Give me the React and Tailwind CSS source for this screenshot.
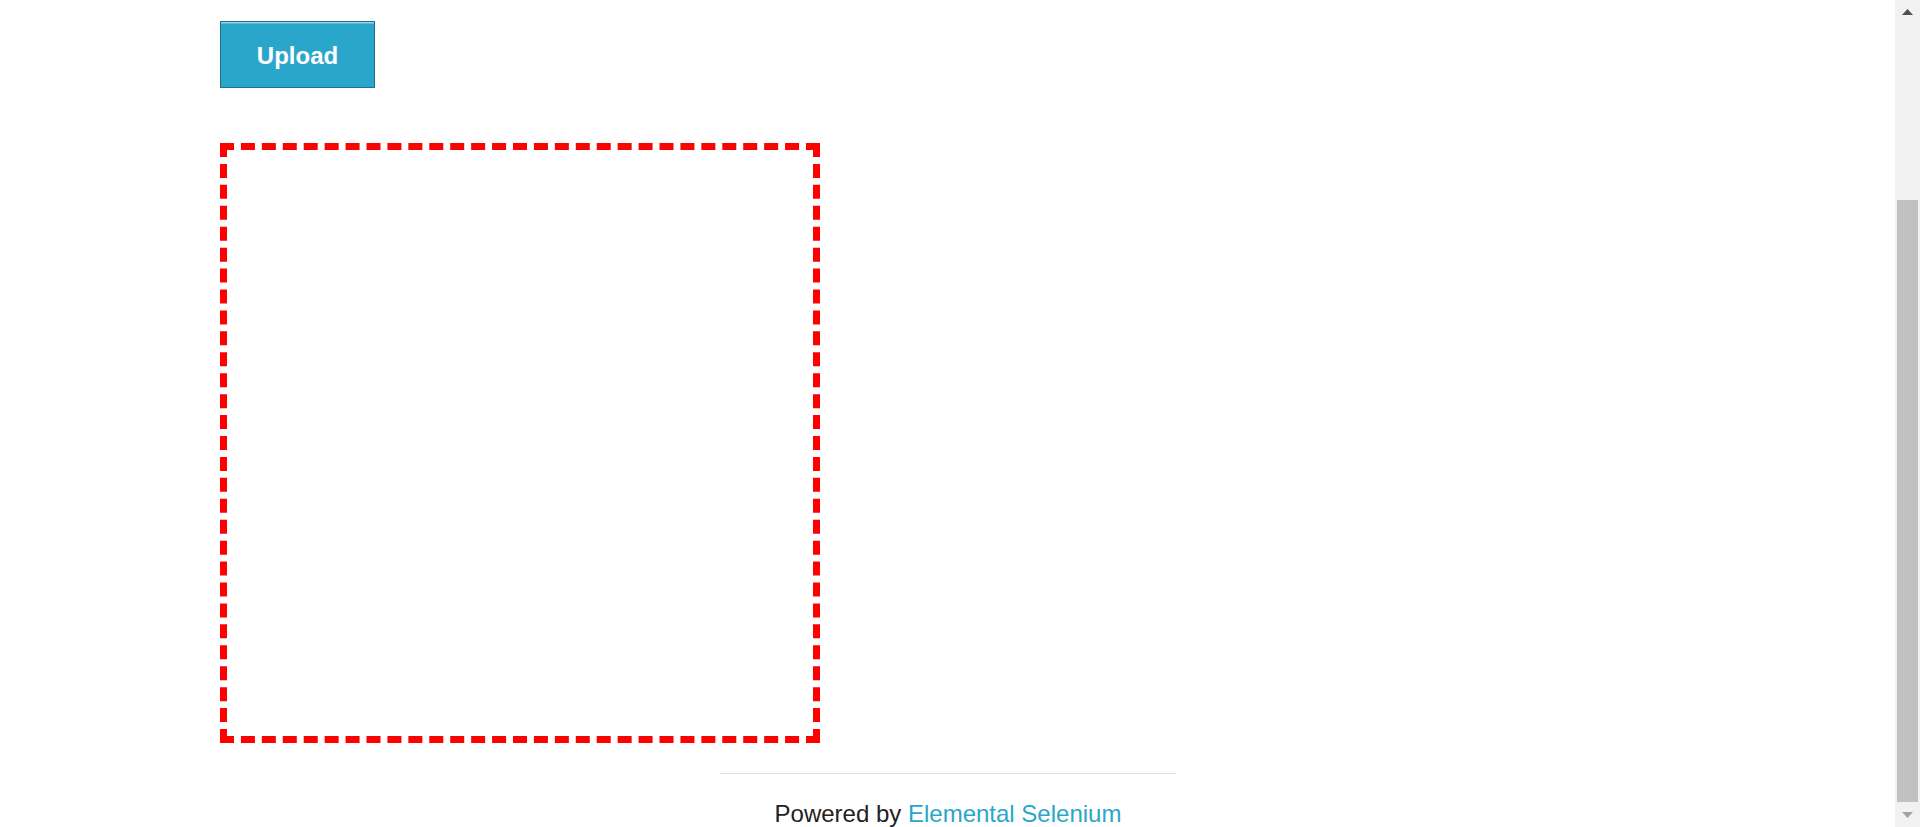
export default function App() {
  return (
    <div className="flex h-[827px] w-full overflow-hidden bg-white font-['Liberation_Sans',Arial,sans-serif]">
      <div className="flex-1 flex flex-col">
        <button className="ml-[220px] mt-[21px] flex h-[67px] w-[155px] items-center justify-center border border-[#1e728c] bg-[#2ba6cb] pt-[2px] text-[24px] font-bold text-white shadow-[inset_0_1.5px_0_rgba(255,255,255,0.5)]">
          Upload
        </button>

        {/* drop area */}
        <div className="ml-[220px] mt-[55px] h-[600px] w-[600px] border-[7px] border-dashed border-[#ff0000]"></div>

        <div className="ml-[720px] mt-[30px] w-[456px] border-t border-[#dddddd]"></div>
        <div className="ml-[720px] mt-[26px] w-[456px] text-center text-[24px] leading-[27px] text-[#222222]">
          Powered by <a href="#" className="text-[#2ba6cb]">Elemental Selenium</a>
        </div>
      </div>

      {/* scrollbar */}
      <div className="flex w-[25px] shrink-0 flex-col bg-[#f1f1f1]">
        <div className="flex h-[25px] items-center justify-center">
          <svg width="11" height="6" viewBox="0 0 11 6" className="mt-[-1px]">
            <polygon points="5.5,0 11,6 0,6" fill="#505050" />
          </svg>
        </div>
        <div className="mt-[175px] ml-[2px] h-[602px] w-[21px] bg-[#c1c1c1]"></div>
        <div className="flex flex-1 items-center justify-center">
          <svg width="11" height="6" viewBox="0 0 11 6">
            <polygon points="0,0 11,0 5.5,6" fill="#a3a3a3" />
          </svg>
        </div>
      </div>
    </div>
  );
}
